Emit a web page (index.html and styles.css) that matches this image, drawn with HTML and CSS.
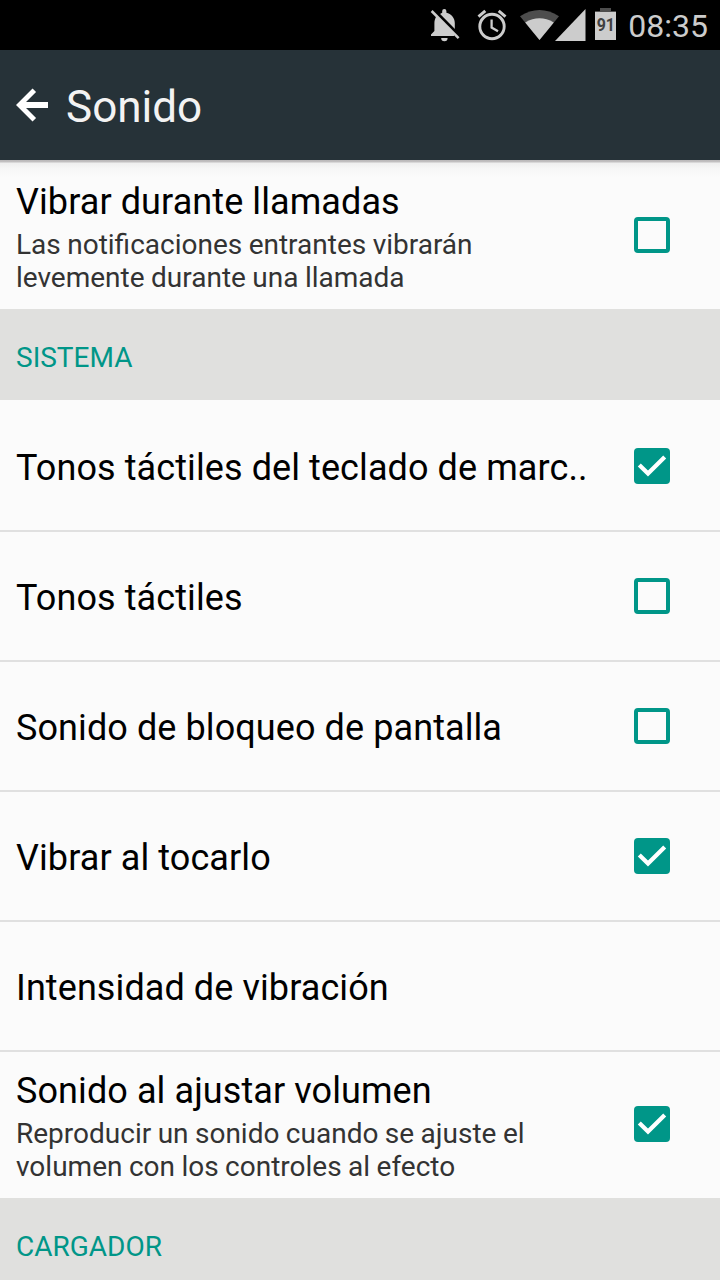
FILE: index.html
```html
<!DOCTYPE html>
<html lang="es">
<head>
<meta charset="UTF-8">
<meta name="viewport" content="width=device-width, initial-scale=1.0">
<title>Sonido</title>
<link rel="stylesheet" href="styles.css">
</head>
<body>
<div class="screen">
  <div class="status-bar">
    <svg class="icon-bell" width="32" height="34" viewBox="0 0 32 34">
      <path fill="#ccc" d="M1 28V26.5L4.4 23V15C4.4 12.4 5.2 10.2 6.4 8.5L24 26V28ZM9.4 6.6C10.4 5.6 11.2 5 12.2 4.7V3A2.1 2.1 0 0 1 16.4 3V4.7C21 5.8 24.8 9.6 24.8 15V22Z"/>
      <path fill="#ccc" d="M11.2 30H17.6A3.2 3.2 0 0 1 11.2 30Z"/>
      <path stroke="#000" stroke-width="2.4" d="M3.6 1.2L31 28.9"/>
      <path stroke="#ccc" stroke-width="2.6" d="M1.6 3L28.6 30.2"/>
    </svg>
    <svg class="icon-alarm" width="30" height="34" viewBox="0 0 30 34" fill="none" stroke="#ccc">
      <circle cx="15" cy="18.5" r="12.2" stroke-width="2.9"/>
      <path stroke-width="2.3" d="M14.6 11.5V19.5L21 23.3"/>
      <path stroke-width="3" d="M1.5 8.6L8.3 2.9M21.7 2.9L28.5 8.6"/>
    </svg>
    <svg class="icon-wifi" width="39" height="32" viewBox="0 0 39 32">
      <path fill="#4d4d4d" d="M0 7.2Q19.5 -5 39 7.2L19.5 31Z"/>
      <path fill="#ccc" d="M5.2 13.4Q19.5 5 33.8 13.4L19.5 31Z"/>
    </svg>
    <svg class="icon-signal" width="31" height="32" viewBox="0 0 31 32">
      <path fill="#ccc" d="M0 32L30.5 0V32Z"/>
    </svg>
    <div class="battery"><span>91</span></div>
    <div class="clock">08:35</div>
  </div>

  <div class="action-bar">
    <svg class="back" width="32" height="34" viewBox="0 0 32 34" fill="none" stroke="#fff">
      <path stroke-width="6" d="M32 17H4"/>
      <path stroke-width="5" d="M18.3 2.2L3.5 17L18.3 31.8"/>
    </svg>
    <h1>Sonido</h1>
  </div>

  <div class="row row-first">
    <div class="text">
      <div class="title">Vibrar durante llamadas</div>
      <div class="summary">Las notificaciones entrantes vibrarán<br>levemente durante una llamada</div>
    </div>
    <div class="checkbox"></div>
  </div>

  <div class="section">SISTEMA</div>

  <div class="row row-top">
    <div class="title">Tonos táctiles del teclado de marc..</div>
    <div class="checkbox checked">
      <svg width="36" height="36" viewBox="0 0 36 36"><path d="M5.3 16.9L14 25.6L30.7 8.9"/></svg>
    </div>
  </div>
  <div class="row">
    <div class="title">Tonos táctiles</div>
    <div class="checkbox"></div>
  </div>
  <div class="row">
    <div class="title">Sonido de bloqueo de pantalla</div>
    <div class="checkbox"></div>
  </div>
  <div class="row">
    <div class="title">Vibrar al tocarlo</div>
    <div class="checkbox checked">
      <svg width="36" height="36" viewBox="0 0 36 36"><path d="M5.3 16.9L14 25.6L30.7 8.9"/></svg>
    </div>
  </div>
  <div class="row">
    <div class="title">Intensidad de vibración</div>
  </div>
  <div class="row row-last">
    <div class="text">
      <div class="title">Sonido al ajustar volumen</div>
      <div class="summary">Reproducir un sonido cuando se ajuste el<br>volumen con los controles al efecto</div>
    </div>
    <div class="checkbox checked">
      <svg width="36" height="36" viewBox="0 0 36 36"><path d="M5.3 16.9L14 25.6L30.7 8.9"/></svg>
    </div>
  </div>

  <div class="section">CARGADOR</div>
</div>
</body>
</html>
```
FILE: styles.css
```css
body {
  margin: 0;
  font-family: Roboto, sans-serif;
  background-color: #fbfbfb;
}

.screen {
  width: 720px;
  height: 1280px;
  overflow: hidden;
}

.status-bar {
  display: flex;
  justify-content: flex-end;
  align-items: flex-start;
  box-sizing: border-box;
  height: 50px;
  padding: 8px 12px 0 0;
  background-color: #000;
}

.icon-bell {
  margin-right: 15px;
}

.icon-alarm {
  margin-right: 13px;
}

.icon-wifi {
  margin: 1px -4px 0 0;
}

.icon-signal {
  margin: 1px 9px 0 0;
}

.battery {
  width: 21px;
  height: 28px;
  margin: 4px 12px 0 0;
  background-color: #ccc;
  color: #404040;
  font-size: 19px;
  font-weight: bold;
  line-height: 25px;
  text-align: center;
  box-shadow: 0 -1px 0 #4d4d4d;
  position: relative;
}

.battery span {
  display: block;
  transform: scaleX(0.84);
}

.battery::before {
  content: "";
  position: absolute;
  left: 5px;
  top: -4px;
  width: 11px;
  height: 4px;
  background-color: #4d4d4d;
}

.clock {
  color: #ccc;
  font-size: 32px;
  line-height: 36px;
}

.action-bar {
  display: flex;
  align-items: center;
  box-sizing: border-box;
  height: 110px;
  padding-left: 16px;
  background-color: #263238;
}

.back {
  margin-right: 18px;
}

h1 {
  margin: 3px 0 0;
  color: #f3f3f3;
  font-size: 44px;
  font-weight: normal;
  line-height: 52px;
}

.row {
  display: flex;
  justify-content: space-between;
  align-items: center;
  box-sizing: border-box;
  height: 130px;
  padding: 0 50px 0 16px;
  border-bottom: 2px solid #e0e0e0;
}

.row-first {
  height: 149px;
  border-bottom: none;
  background: linear-gradient(#b9b7b8 0, #c3c1c2 2px, #eee 3px, #f6f6f6 8px, #fbfbfb 18px);
}

.row-top {
  height: 132px;
  padding-top: 2px;
}

.row-last {
  height: 146px;
  padding-bottom: 2px;
  border-bottom: none;
}

.title {
  color: #000;
  font-size: 36px;
  line-height: 42px;
  letter-spacing: 0.09px;
  padding-top: 4px;
  white-space: nowrap;
}

.text {
  padding-top: 5px;
}

.text .title {
  padding-top: 0;
}

.summary {
  color: #333;
  font-size: 28px;
  line-height: 33px;
  word-spacing: -0.5px;
  padding-top: 5px;
}

.section {
  box-sizing: border-box;
  height: 91px;
  padding: 32px 16px 0;
  background-color: #e0e0de;
  color: #009688;
  font-size: 28px;
  line-height: 33px;
}

.checkbox {
  box-sizing: border-box;
  width: 36px;
  height: 36px;
  border: 4px solid #009688;
  border-radius: 4px;
}

.checkbox.checked {
  border: none;
  background-color: #009688;
}

.checkbox svg {
  display: block;
}

.checkbox path {
  fill: none;
  stroke: #fff;
  stroke-width: 4.2;
}
```
